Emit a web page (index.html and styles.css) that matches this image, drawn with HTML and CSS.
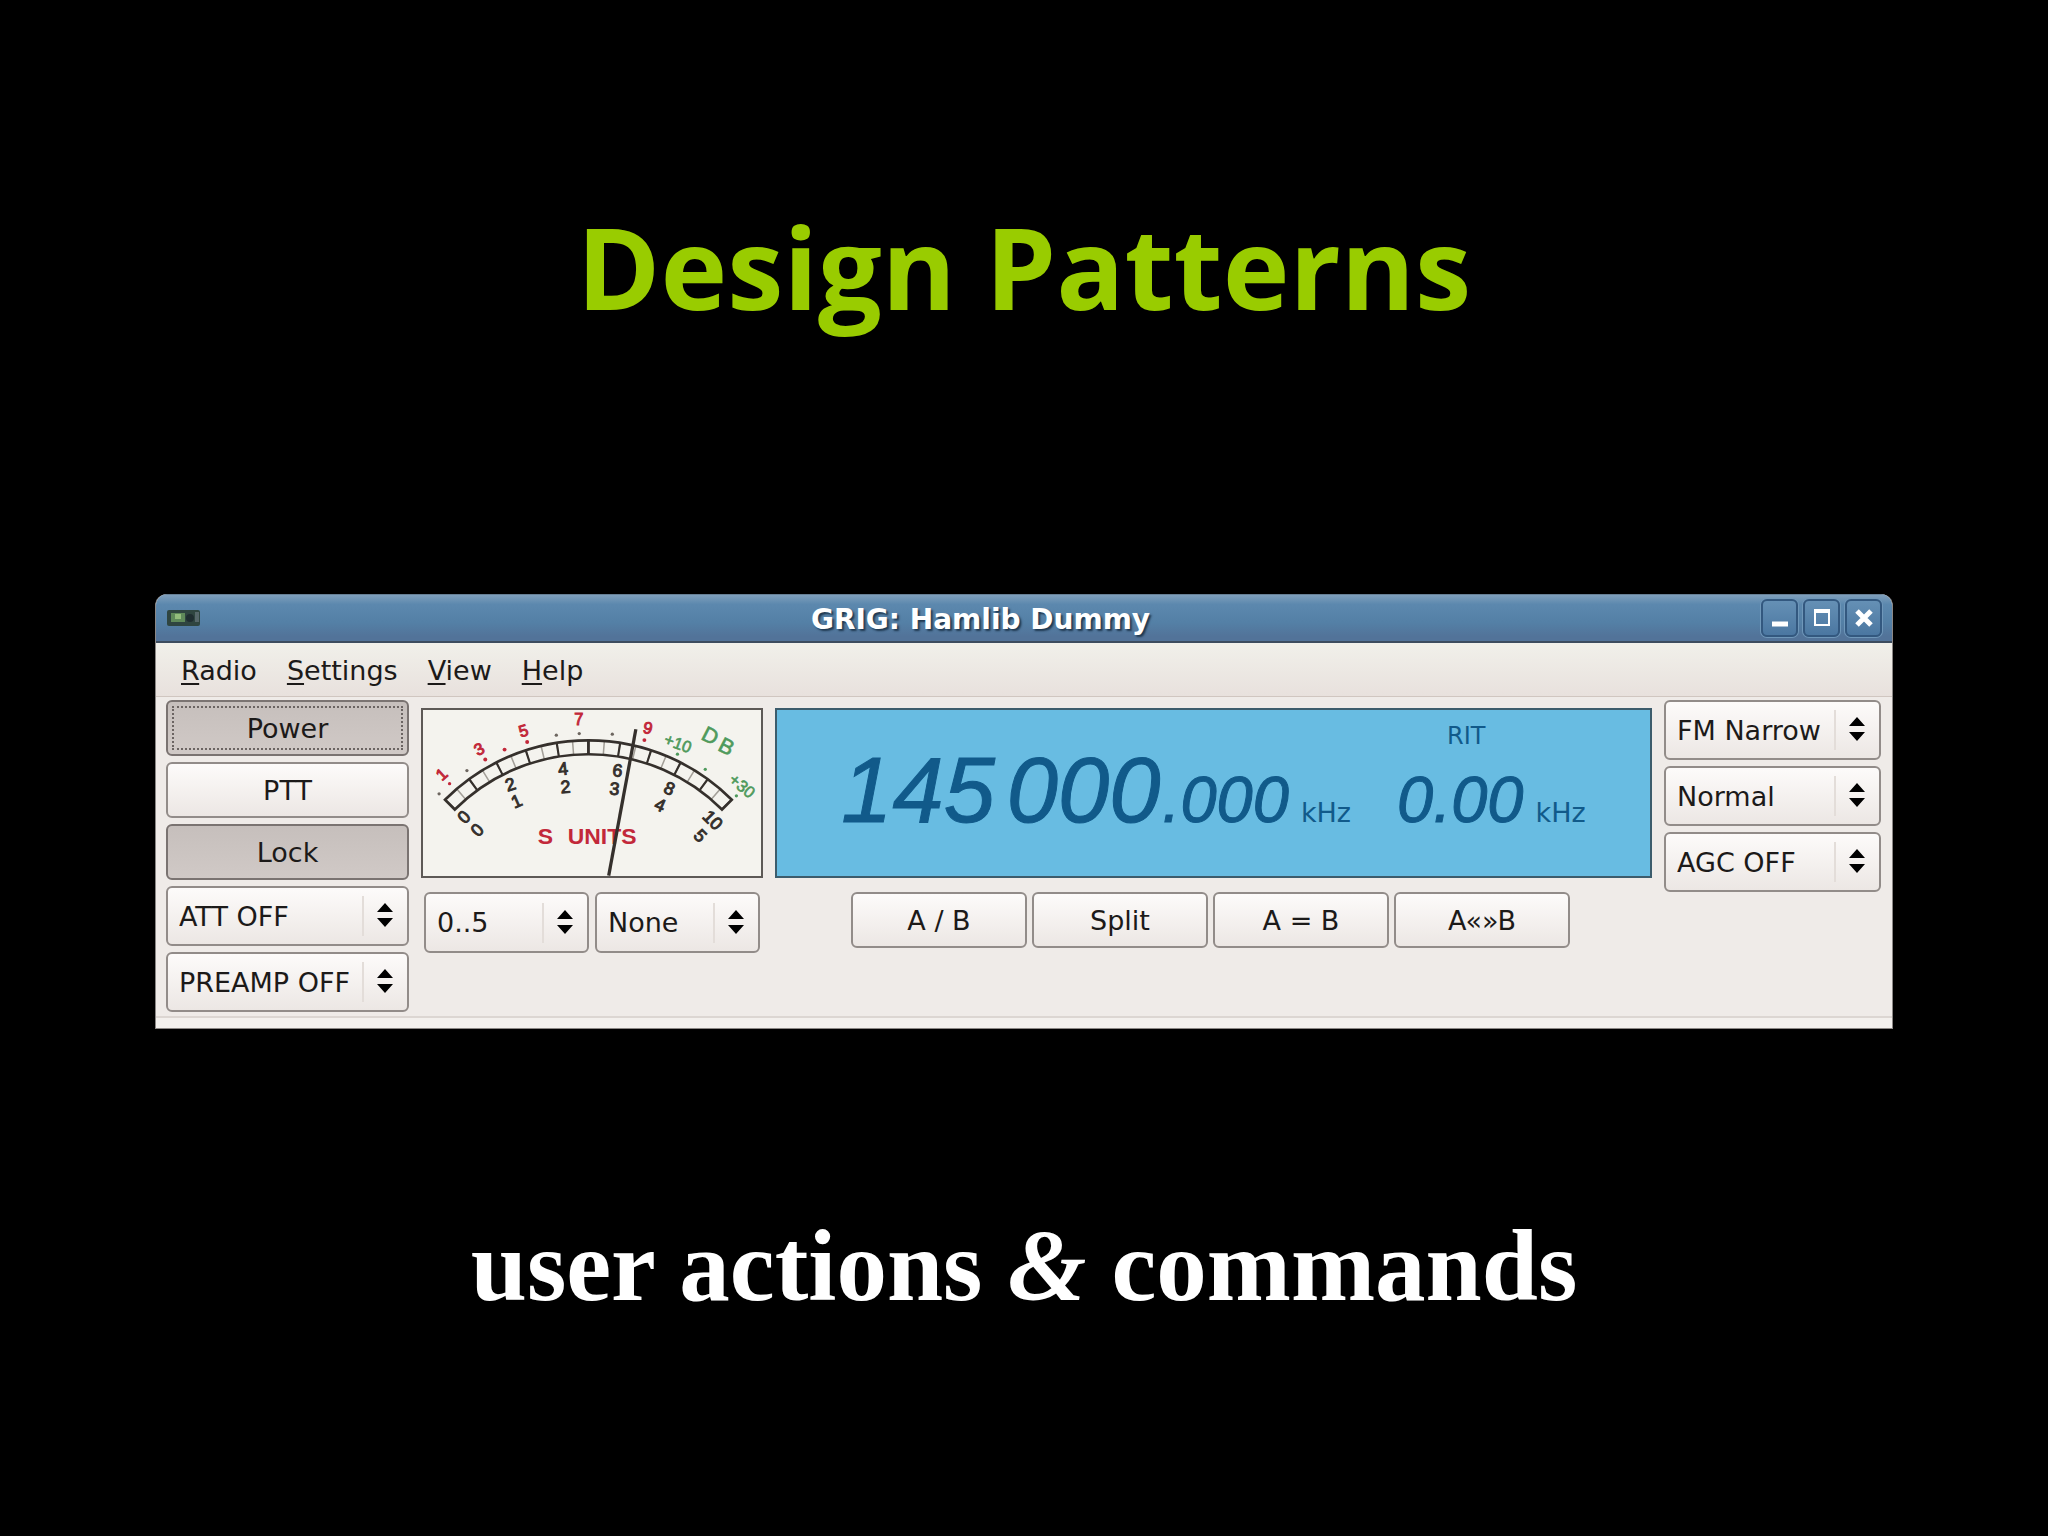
FILE: index.html
```
<!DOCTYPE html>
<html lang="en">
<head>
    <meta charset="UTF-8">
    <meta name="viewport" content="width=device-width, initial-scale=1.0">
    <title>Design Patterns</title>
    <link rel="stylesheet" href="styles.css">
</head>
<body>
    <!-- shared up/down arrows for the drop-downs -->
    <svg class="defs" width="0" height="0">
        <symbol id="arrows" viewBox="0 0 18 26">
            <path d="M9 1 L17 10 H1 Z M1 16 H17 L9 25 Z"/>
        </symbol>
    </svg>

    <main class="slide">
        <h1>Design Patterns</h1>

        <section class="window">
            <header class="titlebar">
                <svg class="app-icon" viewBox="0 0 33 18">
                    <rect x="0" y="1" width="33" height="16" rx="2" fill="#2f4540"/>
                    <rect x="4" y="4" width="14" height="9" fill="#5f8a5a"/>
                    <rect x="8" y="5" width="6" height="5" fill="#93bd7c"/>
                    <circle cx="23" cy="9" r="4" fill="#1f2d30"/>
                    <rect x="28" y="3" width="4" height="10" fill="#56676a"/>
                </svg>
                <h2>GRIG: Hamlib Dummy</h2>
                <div class="window-buttons">
                    <button aria-label="Minimize"><svg viewBox="0 0 20 20"><path d="M2 16 H18" stroke-width="5"/></svg></button>
                    <button aria-label="Maximize"><svg viewBox="0 0 20 20"><path d="M3 3 H17 V17 H3 Z" stroke-width="2"/><path d="M2 3 H18" stroke-width="4"/></svg></button>
                    <button aria-label="Close"><svg viewBox="0 0 20 20"><path d="M3 3 L17 17 M17 3 L3 17" stroke-width="5"/></svg></button>
                </div>
            </header>

            <nav class="menubar">
                <button><u>R</u>adio</button>
                <button><u>S</u>ettings</button>
                <button><u>V</u>iew</button>
                <button><u>H</u>elp</button>
            </nav>

            <div class="panel">
                <div class="controls">
                    <button class="btn pressed focused" aria-pressed="true">Power</button>
                    <button class="btn" aria-pressed="false">PTT</button>
                    <button class="btn pressed" aria-pressed="true">Lock</button>
                    <div class="combo">
                        <select aria-label="Attenuator"><option>ATT OFF</option></select>
                        <svg><use href="#arrows"/></svg>
                    </div>
                    <div class="combo">
                        <select aria-label="Preamp"><option>PREAMP OFF</option></select>
                        <svg><use href="#arrows"/></svg>
                    </div>
                </div>

                <div class="middle">
                    <svg class="meter" viewBox="24 26 1020 507">
                        <!-- scale band -->
                        <path class="tick-light" pathLength="20" d="M100 315 A598 598 0 0 1 946 315"/>
                        <path class="tick-dark" pathLength="20" d="M100 315 A598 598 0 0 1 946 315"/>
                        <path class="band" d="M85 300 A620 620 0 0 1 961 300 L931 330 A577 577 0 0 0 115 330 Z"/>
                        <path class="band" d="M523 118 V161"/>

                        <g class="dots">
                            <circle cx="67" cy="282" r="5"/>
                            <circle cx="152" cy="211" r="5"/>
                            <circle cx="425" cy="103" r="5"/>
                            <circle cx="495" cy="98" r="5"/>
                            <circle cx="596" cy="100" r="5"/>
                        </g>
                        <g class="dots red">
                            <circle cx="99" cy="251" r="5"/>
                            <circle cx="208" cy="177" r="6"/>
                            <circle cx="267" cy="147" r="6"/>
                            <circle cx="336" cy="124" r="6"/>
                            <circle cx="694" cy="118" r="6"/>
                        </g>
                        <g class="dots green">
                            <circle cx="795" cy="161" r="5"/>
                            <circle cx="880" cy="207" r="5"/>
                            <circle cx="975" cy="288" r="5"/>
                        </g>

                        <g class="scale red">
                            <text transform="translate(73 220) rotate(-42)" y="20">1</text>
                            <text transform="translate(188 143) rotate(-28)" y="20">3</text>
                            <text transform="translate(324 87) rotate(-17)" y="20">5</text>
                            <text transform="translate(494 55)" y="18">7</text>
                            <text transform="translate(705 80) rotate(12)" y="18">9</text>
                        </g>
                        <g class="scale green">
                            <text transform="translate(797 127) rotate(20)" y="18">+10</text>
                            <text class="db" transform="translate(895 105) rotate(27)" y="22">D</text>
                            <text class="db" transform="translate(945 138) rotate(27)" y="22">B</text>
                            <text transform="translate(993 257) rotate(40)" y="18">+30</text>
                        </g>
                        <g class="scale">
                            <text transform="translate(142 352) rotate(-45)" y="20">0</text>
                            <text transform="translate(182 391) rotate(-45)" y="20">0</text>
                            <text transform="translate(284 252) rotate(-18)" y="20">2</text>
                            <text transform="translate(303 303) rotate(-24)" y="20">1</text>
                            <text transform="translate(445 204) rotate(-6)" y="20">4</text>
                            <text transform="translate(453 259) rotate(-4)" y="20">2</text>
                            <text transform="translate(612 209) rotate(6)" y="20">6</text>
                            <text transform="translate(603 265) rotate(6)" y="20">3</text>
                            <text transform="translate(771 264) rotate(24)" y="20">8</text>
                            <text transform="translate(743 315) rotate(24)" y="20">4</text>
                            <text transform="translate(904 361) rotate(45)" y="20">10</text>
                            <text transform="translate(866 409) rotate(45)" y="20">5</text>
                        </g>
                        <text class="units" x="392" y="435">S</text>
                        <text class="units" x="565" y="435">UNITS</text>
                        <path class="needle" d="M668 85 L585 532"/>
                    </svg>
                    <div class="meter-options">
                        <div class="combo">
                            <select aria-label="Meter range"><option>0..5</option></select>
                            <svg><use href="#arrows"/></svg>
                        </div>
                        <div class="combo">
                            <select aria-label="Meter function"><option>None</option></select>
                            <svg><use href="#arrows"/></svg>
                        </div>
                    </div>
                </div>

                <div class="middle">
                    <div class="lcd">
                        <div class="frequency">
                            <span class="digits-big">145</span>
                            <span class="digits-big">000</span>
                            <span class="digits">.000</span>
                            <span class="unit">kHz</span>
                        </div>
                        <div class="rit">
                            <span class="rit-label">RIT</span>
                            <span class="digits">0.00</span>
                            <span class="unit">kHz</span>
                        </div>
                    </div>
                    <div class="vfo">
                        <button class="btn">A / B</button>
                        <button class="btn">Split</button>
                        <button class="btn">A = B</button>
                        <button class="btn">A«»B</button>
                    </div>
                </div>

                <div class="controls">
                    <div class="combo">
                        <select aria-label="Mode"><option>FM Narrow</option></select>
                        <svg><use href="#arrows"/></svg>
                    </div>
                    <div class="combo">
                        <select aria-label="Filter"><option>Normal</option></select>
                        <svg><use href="#arrows"/></svg>
                    </div>
                    <div class="combo">
                        <select aria-label="AGC"><option>AGC OFF</option></select>
                        <svg><use href="#arrows"/></svg>
                    </div>
                </div>
            </div>
            <footer class="statusbar"></footer>
        </section>

        <p class="subtitle">user actions <em>&amp;</em> commands</p>
    </main>
</body>
</html>
```

FILE: styles.css
```
* {
    box-sizing: border-box;
}

body {
    margin: 0;
    background-color: #000;
    font-family: "DejaVu Sans", sans-serif;
    font-size: 27px;
    color: #1c1a19;
}

button, select {
    font: inherit;
    color: inherit;
}

.defs {
    position: absolute;
}

.slide {
    padding: 206px 155px 0;
}

h1 {
    margin: 0 0 268px;
    font-family: "Open Sans", sans-serif;
    font-size: 113px;
    line-height: 120px;
    font-weight: bold;
    text-align: center;
    color: #99cc00;
}

.subtitle {
    margin: 187px 0 0;
    font-family: "Liberation Serif", serif;
    font-size: 101px;
    line-height: 100px;
    font-weight: bold;
    text-align: center;
    color: #fff;
}

/* window frame */
.window {
    background-color: #efebe8;
    border: 1px solid #8b8785;
    border-top: none;
    border-radius: 12px 12px 0 0;
    overflow: hidden;
}

.titlebar {
    display: flex;
    align-items: center;
    height: 49px;
    padding: 0 10px 0 11px;
    background: linear-gradient(#7f9fbc, #5c88ae 20%, #5480a6 60%, #527399 90%);
    border-top: 1px solid #667f95;
    border-bottom: 2px solid #3d4c5e;
}

.app-icon {
    width: 33px;
    height: 18px;
}

.titlebar h2 {
    flex: 1;
    margin: 0;
    padding-top: 4px;
    font-size: 28px;
    line-height: 36px;
    text-align: center;
    color: #fff;
    text-shadow: 2px 2px 2px #1f3850;
}

.window-buttons {
    display: flex;
    gap: 5px;
}

.window-buttons button {
    display: flex;
    align-items: center;
    justify-content: center;
    width: 37px;
    height: 38px;
    padding: 0;
    background: linear-gradient(#6590b5, #4b77a1);
    border: 2px solid #33587f;
    border-radius: 6px;
    box-shadow: 0 0 0 1px #6f97b9;
}

.window-buttons svg {
    width: 20px;
    height: 20px;
    fill: none;
    stroke: #fff;
}

.menubar {
    display: flex;
    height: 54px;
    padding: 0 10px;
    background: linear-gradient(#f1f0ea, #e8e1dd);
    border-bottom: 1px solid #d0c6c0;
}

.menubar button {
    padding: 2px 15px 0;
    background: none;
    border: none;
}

.menubar u {
    text-underline-offset: 3px;
    text-decoration-thickness: 2px;
}

/* radio controls */
.panel {
    display: grid;
    grid-template-columns: 243px 342px 1fr 217px;
    gap: 12px;
    padding: 3px 11px 4px 10px;
}

.controls {
    display: flex;
    flex-direction: column;
    gap: 6px;
}

.controls .combo {
    height: 60px;
}

.btn {
    height: 56px;
    padding: 0;
    background: linear-gradient(#fdfbfa, #ece7e4);
    border: 2px solid #928c89;
    border-radius: 6px;
}

.btn.pressed {
    background: linear-gradient(#c6bfbc, #d0c9c6);
    border-color: #7a7371;
}

.btn.focused {
    outline: 2px dotted #6b6462;
    outline-offset: -8px;
}

.combo {
    display: grid;
    align-items: center;
}

.combo select, .combo svg {
    grid-area: 1 / 1;
}

.combo select {
    appearance: none;
    width: 100%;
    height: 100%;
    padding: 0 11px;
    background: linear-gradient(#fdfbfa, #ece7e4);
    border: 2px solid #928c89;
    border-radius: 6px;
}

.combo svg {
    justify-self: end;
    width: 47px;
    height: 40px;
    padding: 6px 15px 8px 12px;
    border-left: 2px solid #e3ddd9;
    pointer-events: none;
}

.middle {
    display: flex;
    flex-direction: column;
    gap: 14px;
    padding-top: 8px;
}

.meter {
    width: 100%;
    height: 170px;
    background-color: #f4f3ee;
    border: 2px solid #5d5956;
}

.band, .tick-light, .tick-dark, .needle {
    fill: none;
    stroke: #35302c;
}

.band {
    stroke-width: 8;
}

.tick-light, .tick-dark {
    stroke-width: 43;
}

.tick-dark {
    stroke-dasharray: 0.14 1.86;
    stroke-dashoffset: 0.07;
}

.tick-light {
    stroke: #a39f98;
    stroke-dasharray: 0.1 0.9;
    stroke-dashoffset: 0.05;
}

.needle {
    stroke-width: 10;
}

.scale {
    font-family: "Liberation Sans", sans-serif;
    font-size: 54px;
    text-anchor: middle;
    fill: #35302c;
    stroke: #35302c;
    stroke-width: 3;
}

.dots {
    fill: #6d6660;
}

.red, .units {
    fill: #c2283a;
}

.green {
    fill: #4f9a5c;
}

.scale.red, .scale.green {
    font-size: 50px;
}

.scale.red {
    stroke: #c2283a;
}

.scale.green {
    stroke: #4f9a5c;
    stroke-width: 2;
}

.scale .db {
    font-size: 66px;
}

.units {
    font-family: "Liberation Sans", sans-serif;
    font-size: 70px;
    font-weight: bold;
    text-anchor: middle;
}

.meter-options {
    display: grid;
    grid-template-columns: 1fr 1fr;
    gap: 6px;
    padding: 0 3px;
}

.meter-options .combo {
    height: 61px;
}

.lcd {
    display: flex;
    justify-content: center;
    align-items: flex-end;
    gap: 46px;
    height: 170px;
    padding-bottom: 23px;
    background-color: #68bce2;
    border: 2px solid #3c5c6c;
    color: #115a8a;
}

.frequency, .rit {
    line-height: 80px;
}

.frequency {
    display: flex;
    align-items: baseline;
}

.digits-big, .digits {
    margin-right: 12px;
    font-family: "Liberation Sans", sans-serif;
    font-style: italic;
    -webkit-text-stroke: 1px #115a8a;
}

.digits-big {
    font-size: 92px;
}

.digits {
    font-size: 65px;
}

.digits-big + .digits {
    margin-left: -10px;
}

.rit {
    display: grid;
    grid-template-columns: auto auto;
    align-items: baseline;
    row-gap: 9px;
}

.rit-label {
    grid-column: 1 / 2;
    font-size: 24px;
    line-height: 30px;
    text-align: center;
}

.rit .digits {
    grid-column: 1 / 2;
}

.vfo {
    display: flex;
    justify-content: center;
    gap: 5px;
    padding-right: 6px;
}

.vfo .btn {
    width: 176px;
}

.statusbar {
    height: 12px;
    border-top: 2px solid #dcd6d2;
    background-color: #f3f0ed;
}
```
